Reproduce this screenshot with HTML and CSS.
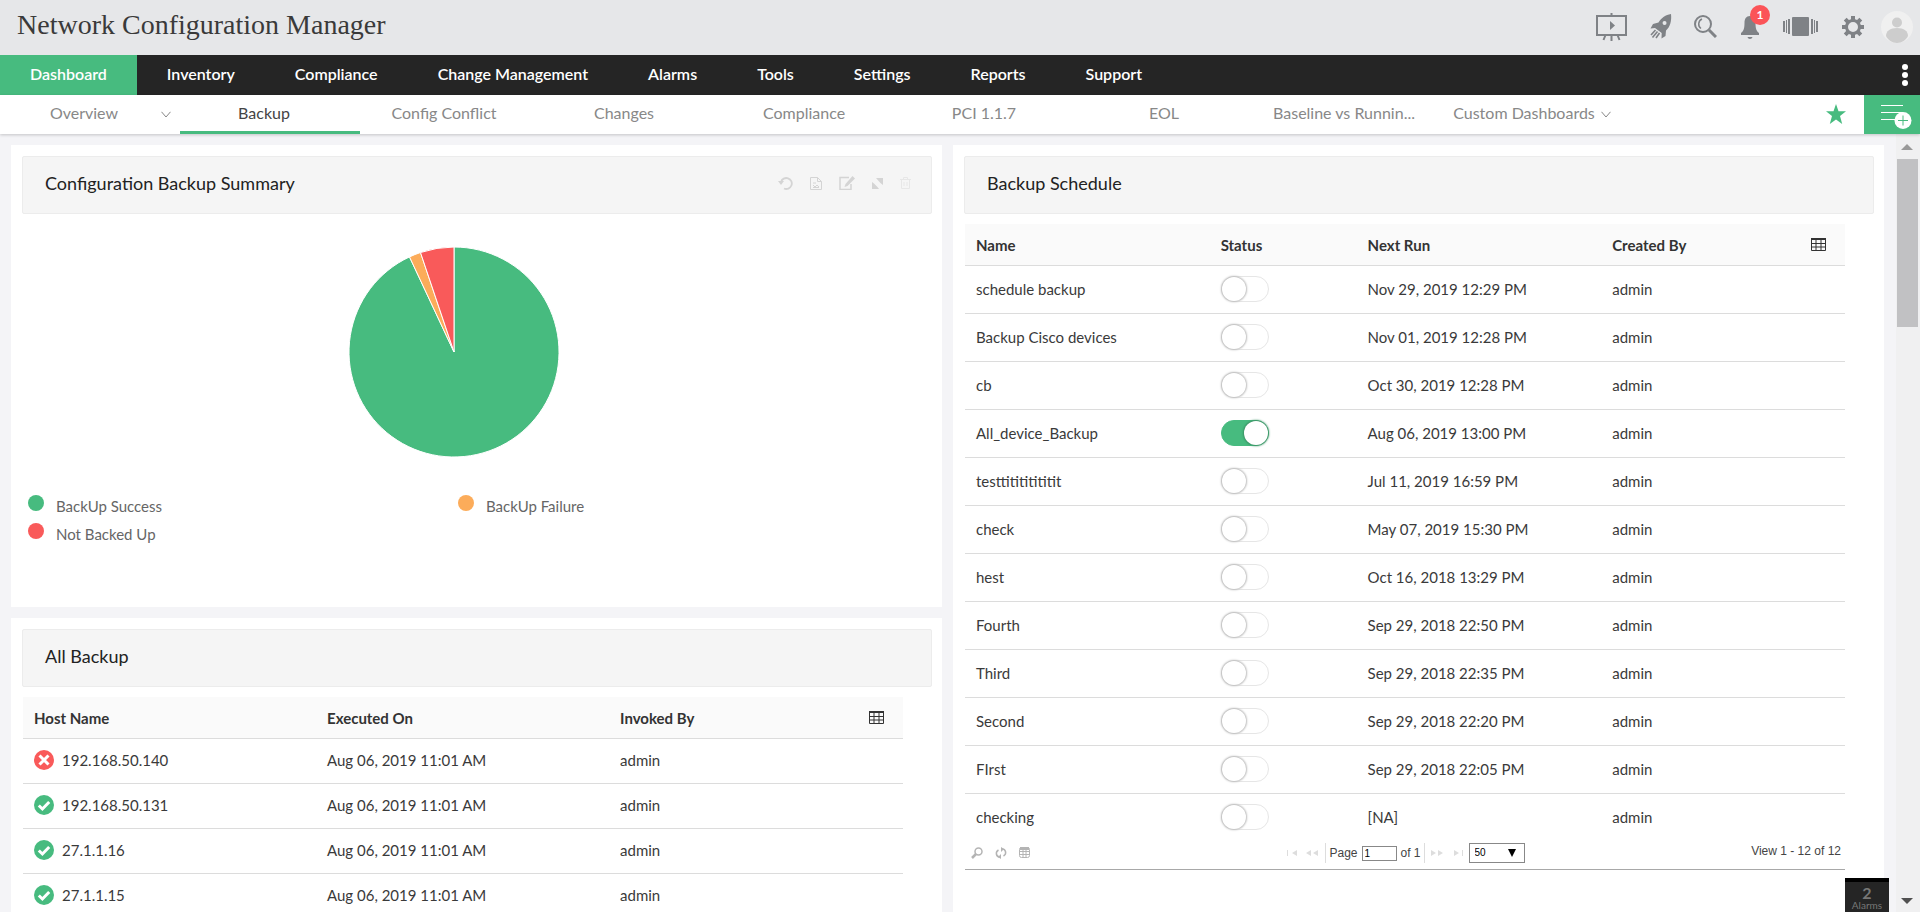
FILE: index.html
```
<!DOCTYPE html>
<html lang="en">
<head>
<meta charset="utf-8">
<title>Network Configuration Manager</title>
<link rel="stylesheet" href="styles.css">
</head>
<body>
<svg class="defs" width="0" height="0" aria-hidden="true">
  <symbol id="grid" viewBox="0 0 15 13"><path fill="none" stroke="currentColor" d="M.5 1.5h14v11H.5zM.5 5.5h14M.5 9h14M5 1v12M10 1v12"/><path fill="currentColor" d="M0 0h15v2H0z"/></symbol>
  <symbol id="ok" viewBox="0 0 20 20"><circle cx="10" cy="10" r="10" fill="#47bb7f"/><path d="M4.800 10.500l3.600 3.500 6.800-7" fill="none" stroke="#fff" stroke-width="3"/></symbol>
  <symbol id="bad" viewBox="0 0 20 20"><circle cx="10" cy="10" r="10" fill="#f95a5a"/><path d="M5.500 5.500l9 9m0-9l-9 9" fill="none" stroke="#fff" stroke-width="3"/></symbol>
  <symbol id="chev" viewBox="0 0 10 7"><path d="M.5.8L5 6 9.500.8" fill="none" stroke="currentColor"/></symbol>
</svg>

<header class="top">
  <h1>Network Configuration Manager</h1>
  <div class="tools">
    <button class="t-easel" aria-label="Presentation"><svg width="31" height="28" viewBox="0 0 31 28"><g fill="none" stroke="currentColor" stroke-width="2"><path d="M1 3h29v19H1zM15.500 0v3M15.500 22v6M9.500 22l-2 5M21.500 22l2 5"/></g><path fill="currentColor" d="M14 8l5 4.500-5 4.500z"/></svg></button>
    <button class="t-rocket" aria-label="Quick start"><svg width="22" height="25" viewBox="0 0 22 25"><path fill="currentColor" fill-rule="evenodd" d="M21 0c.8 7-.8 13-5 16.500L15.500 22l-4 2.500.2-5.500L5 14 .5 14.500 3 10l5.500-1.500C11.500 3.500 15.500 1 21 0zM14.500 7a2 2 0 1 0 .1 4 2 2 0 0 0-.1-4z"/><path fill="none" stroke="currentColor" stroke-width="1.600" d="M5.500 16L1 21M7.500 17.500l-5 6M9.500 19l-3.500 5"/></svg></button>
    <button class="t-search" aria-label="Search"><svg width="23" height="23" viewBox="0 0 23 23"><g fill="none" stroke="currentColor"><circle cx="9" cy="9" r="8" stroke-width="2"/><path stroke-width="1.500" d="M8 4a5.500 5.500 0 0 0-1 9.500"/><path stroke-width="3" d="M15 15l7 7"/></g></svg></button>
    <button class="t-bell" aria-label="Notifications"><svg width="18" height="24" viewBox="0 0 18 24"><path fill="currentColor" d="M9 1c4 0 5.500 3 5.500 7 0 6 1 8 3.500 10v2H0v-2c2.500-2 3.500-4 3.500-10C3.500 4 5 1 9 1zM6.500 22h5c-.5 2.500-4.500 2.500-5 0z"/></svg><span class="badge">1</span></button>
    <button class="t-carousel" aria-label="Widgets"><svg width="35" height="19" viewBox="0 0 35 19"><g fill="currentColor"><rect x="9" width="17" height="19" rx="1"/><path d="M0 4h2v11H0zM3 3h1v13H3zM5 2h2v15H5zM28 2h2v15h-2zM31 3h1v13h-1zM33 4h2v11h-2z"/></g></svg></button>
    <button class="t-gear" aria-label="Settings"><svg width="22" height="22" viewBox="0 0 22 22"><circle cx="11" cy="11" r="6.500" fill="none" stroke="currentColor" stroke-width="3"/><g stroke="currentColor" stroke-width="4"><path d="M11 0v4M11 18v4M0 11h4M18 11h4M3.200 3.200L6 6M16 16l2.800 2.800M3.200 18.800L6 16M16 6l2.800-2.800"/></g></svg></button>
    <button class="t-user" aria-label="Account"><svg width="32" height="32" viewBox="0 0 32 32"><circle cx="16" cy="16" r="16" fill="#f0f0f0"/><g fill="#cdcdcd"><circle cx="16" cy="11.500" r="5"/><path d="M5 25c0-5 4-8 11-8s11 3 11 8c-2 4-6 7-11 7S7 29 5 25z"/></g></svg></button>
  </div>
</header>

<nav class="main-nav">
  <a class="on" href="#">Dashboard</a><a href="#">Inventory</a><a href="#">Compliance</a><a href="#">Change Management</a><a href="#">Alarms</a><a href="#">Tools</a><a href="#">Settings</a><a href="#">Reports</a><a href="#">Support</a>
  <button class="more" aria-label="More"><svg width="6" height="22" viewBox="0 0 6 22" fill="#fff"><circle cx="3" cy="3" r="3"/><circle cx="3" cy="11" r="3"/><circle cx="3" cy="19" r="3"/></svg></button>
</nav>

<nav class="sub-nav">
  <a href="#">Overview<svg class="chev" width="10" height="7"><use href="#chev"/></svg></a>
  <a class="on" href="#">Backup</a>
  <a href="#">Config Conflict</a>
  <a href="#">Changes</a>
  <a href="#">Compliance</a>
  <a href="#">PCI 1.1.7</a>
  <a href="#">EOL</a>
  <a href="#">Baseline vs Runnin...</a>
  <a href="#">Custom Dashboards<svg class="chev" width="10" height="7"><use href="#chev"/></svg></a>
  <button class="star" aria-label="Favourite"><svg width="20" height="20" viewBox="0 0 20 20"><path fill="#47bb7f" d="M10 0l2.500 7.300H20l-6 4.700 2.200 8L10 15.400 3.800 20 6 12 0 7.300h7.500z"/></svg></button>
  <button class="add" aria-label="Add widget"><svg width="31" height="26" viewBox="0 0 31 26"><path stroke="#fff" d="M0 1.500h22M0 8.500h22M0 15.500h15"/><circle cx="22" cy="16.500" r="8.500" fill="#fff"/><path stroke="#47bb7f" d="M17 16.500h10M22 11.500v10"/></svg></button>
</nav>

<div class="viewport">
  <main class="board">
    <div class="col">
      <section class="card summary">
        <div class="card-head">
          <h2>Configuration Backup Summary</h2>
          <div class="card-tools">
            <svg width="15" height="14" viewBox="0 0 15 14"><path d="M3 6a5.500 5.500 0 1 1 3 6.500" fill="none" stroke="currentColor" stroke-width="1.800"/><path fill="currentColor" d="M0 5h6L3 9z"/></svg>
            <svg width="12" height="13" viewBox="0 0 12 13"><path d="M.5.5h7l4 4v8H.5zM7.500.5v4h4M3 6h3M3 8l2 2 2-2 2 2M3 10.500h6" fill="none" stroke="currentColor"/></svg>
            <svg width="16" height="14" viewBox="0 0 16 14"><path d="M10 1.500H1v12h11V8" fill="none" stroke="currentColor" stroke-width="1.500"/><path fill="currentColor" d="M13.500 0L16 2.500 8.500 10 5.500 11l1-3z"/></svg>
            <svg width="11" height="11" viewBox="0 0 11 11"><path fill="currentColor" d="M4 0h7v7L9 5.500 7.500 4zM0 4l2 1.500L5.500 9 7 11H0z"/></svg>
            <svg class="faint" width="11" height="12" viewBox="0 0 11 12"><path d="M0 2.500h11M3.500 2V.5h4V2M1.500 3v8.500h8V3M4 5v4M7 5v4" fill="none" stroke="currentColor"/></svg>
          </div>
        </div>
        <div class="chart">
          <svg width="212" height="212" viewBox="-106 -106 212 212" role="img" aria-label="Backup status">
            <g stroke="#fff">
              <path fill="#47bb7f" d="M0 0V-105A105 105 0 1 1-44.500-95.100Z"/>
              <path fill="#fcac5a" d="M0 0L-44.500-95.100A105 105 0 0 1-33.500-99.500Z"/>
              <path fill="#f95a5a" d="M0 0L-33.500-99.500A105 105 0 0 1 0-105Z"/>
            </g>
          </svg>
        </div>
        <ul class="legend">
          <li class="green">BackUp Success</li><li class="orange">BackUp Failure</li><li class="red">Not Backed Up</li>
        </ul>
      </section>

      <section class="card">
        <div class="card-head"><h2>All Backup</h2></div>
        <table class="grid hosts">
          <colgroup><col class="third"><col class="third"><col></colgroup>
          <thead><tr><th>Host Name</th><th>Executed On</th><th><div class="last">Invoked By<button aria-label="Columns"><svg width="15" height="13"><use href="#grid"/></svg></button></div></th></tr></thead>
          <tbody>
            <tr><td><div class="host"><svg width="20" height="20"><use href="#bad"/></svg>192.168.50.140</div></td><td>Aug 06, 2019 11:01 AM</td><td>admin</td></tr>
            <tr><td><div class="host"><svg width="20" height="20"><use href="#ok"/></svg>192.168.50.131</div></td><td>Aug 06, 2019 11:01 AM</td><td>admin</td></tr>
            <tr><td><div class="host"><svg width="20" height="20"><use href="#ok"/></svg>27.1.1.16</div></td><td>Aug 06, 2019 11:01 AM</td><td>admin</td></tr>
            <tr><td><div class="host"><svg width="20" height="20"><use href="#ok"/></svg>27.1.1.15</div></td><td>Aug 06, 2019 11:01 AM</td><td>admin</td></tr>
          </tbody>
        </table>
      </section>
    </div>

    <div class="col">
      <section class="card">
        <div class="card-head"><h2>Backup Schedule</h2></div>
        <table class="grid schedule">
          <colgroup><col class="wide"><col class="slim"><col class="wide"><col></colgroup>
          <thead><tr><th>Name</th><th>Status</th><th>Next Run</th><th><div class="last">Created By<button aria-label="Columns"><svg width="15" height="13"><use href="#grid"/></svg></button></div></th></tr></thead>
          <tbody>
            <tr><td>schedule backup</td><td><input type="checkbox" class="switch" aria-label="schedule backup"></td><td>Nov 29, 2019 12:29 PM</td><td>admin</td></tr>
            <tr><td>Backup Cisco devices</td><td><input type="checkbox" class="switch" aria-label="Backup Cisco devices"></td><td>Nov 01, 2019 12:28 PM</td><td>admin</td></tr>
            <tr><td>cb</td><td><input type="checkbox" class="switch" aria-label="cb"></td><td>Oct 30, 2019 12:28 PM</td><td>admin</td></tr>
            <tr><td>All_device_Backup</td><td><input type="checkbox" class="switch" aria-label="All_device_Backup" checked></td><td>Aug 06, 2019 13:00 PM</td><td>admin</td></tr>
            <tr><td>testtitititititit</td><td><input type="checkbox" class="switch" aria-label="testtitititititit"></td><td>Jul 11, 2019 16:59 PM</td><td>admin</td></tr>
            <tr><td>check</td><td><input type="checkbox" class="switch" aria-label="check"></td><td>May 07, 2019 15:30 PM</td><td>admin</td></tr>
            <tr><td>hest</td><td><input type="checkbox" class="switch" aria-label="hest"></td><td>Oct 16, 2018 13:29 PM</td><td>admin</td></tr>
            <tr><td>Fourth</td><td><input type="checkbox" class="switch" aria-label="Fourth"></td><td>Sep 29, 2018 22:50 PM</td><td>admin</td></tr>
            <tr><td>Third</td><td><input type="checkbox" class="switch" aria-label="Third"></td><td>Sep 29, 2018 22:35 PM</td><td>admin</td></tr>
            <tr><td>Second</td><td><input type="checkbox" class="switch" aria-label="Second"></td><td>Sep 29, 2018 22:20 PM</td><td>admin</td></tr>
            <tr><td>FIrst</td><td><input type="checkbox" class="switch" aria-label="FIrst"></td><td>Sep 29, 2018 22:05 PM</td><td>admin</td></tr>
            <tr><td>checking</td><td><input type="checkbox" class="switch" aria-label="checking"></td><td>[NA]</td><td>admin</td></tr>
          </tbody>
        </table>
        <div class="pager">
          <div class="pager-tools">
            <svg width="12" height="12" viewBox="0 0 12 12"><circle cx="7.500" cy="4.500" r="3.500" fill="none" stroke="currentColor" stroke-width="1.500"/><path stroke="currentColor" stroke-width="2.500" d="M5 7l-4 4"/></svg>
            <svg width="12" height="12" viewBox="0 0 12 12"><path fill="none" stroke="currentColor" stroke-width="1.500" d="M5 10C1 10 0 5 3.500 3M7 2c4 0 5 5 1.500 7"/><path fill="currentColor" d="M6 0v5L9 2zM6 7v5L3 10z"/></svg>
            <svg width="11" height="11" viewBox="0 0 11 11"><rect x=".5" y=".5" width="10" height="10" rx="2" fill="none" stroke="currentColor"/><path fill="none" stroke="currentColor" d="M1 4.500h9M1 7.500h9M4 2v8M7 2v8"/><path fill="currentColor" d="M1 0h9v3H1z"/></svg>
          </div>
          <div class="pager-mid">
            <svg class="arrows" width="32" height="8" viewBox="0 0 32 8" fill="currentColor"><path d="M0 1h1v6H0zM5 4l5-3v6zM19 4l5-3v6zM26 4l5-3v6z"/></svg>
            <label class="page">Page <input type="text" value="1"> of 1</label>
            <svg class="arrows" width="32" height="8" viewBox="0 0 32 8" fill="currentColor"><path d="M5 4L0 1v6zM12 4L7 1v6zM28 4l-5-3v6zM31 1h1v6h-1z"/></svg>
            <span class="pick"><select aria-label="Rows per page"><option>50</option></select></span>
          </div>
          <div class="view">View 1 - 12 of 12</div>
        </div>
      </section>
    </div>
  </main>
  <div class="scroll" aria-hidden="true"><i class="up"></i><i class="thumb"></i><i class="down"></i></div>
  <a class="alarms" href="#"><b>2</b>Alarms</a>
</div>
</body>
</html>
```
FILE: styles.css
```
* { box-sizing: border-box; }
body {
  margin: 0;
  height: 100vh;
  overflow: hidden;
  display: flex;
  flex-direction: column;
  background: #f4f4f7;
  color: #3a3a3a;
  font: 15px/20px Lato, "Liberation Sans", sans-serif;
}
button { border: 0; padding: 0; background: none; color: inherit; font: inherit; display: block; }
svg { display: block; flex: none; }
a { color: inherit; text-decoration: none; }
h1, h2 { margin: 0; font-weight: 400; }
.defs { position: absolute; }

.top {
  flex: none;
  height: 55px;
  padding: 0 7px 0 17px;
  display: flex;
  justify-content: space-between;
  background: #e6e7e9;
}
.top h1 { padding-top: 7px; color: #3a3a3a; font: 300 28px/36px "Roboto Slab", "Liberation Serif", serif; }
.tools { display: flex; align-items: center; gap: 24px; padding-bottom: 2px; color: #7f8286; }
.t-rocket { margin-left: -1px; }
.t-search { margin-left: -2px; }
.t-bell { position: relative; }
.t-user { margin-left: -7px; }
.badge {
  position: absolute;
  left: 9px;
  top: -10px;
  width: 20px;
  height: 20px;
  border-radius: 50%;
  background: #fb5458;
  color: #fff;
  font: 700 12px/20px Lato, sans-serif;
  text-align: center;
}

.main-nav {
  flex: none;
  height: 40px;
  display: flex;
  background: #252525;
  color: #fff;
  font-size: 16px;
  font-weight: 600;
  line-height: 38px;
}
.main-nav a { padding: 0 30px; }
.main-nav .on { background: #47bb7f; }
.more { margin: 0 12px 0 auto; }

.sub-nav {
  flex: none;
  position: relative;
  z-index: 1;
  height: 39px;
  display: flex;
  background: #fff;
  box-shadow: 0 1px 3px rgba(0, 0, 0, .2);
  color: #888;
  font-size: 16px;
  line-height: 36px;
}
.sub-nav a { position: relative; flex: 0 0 180px; padding-right: 12px; text-align: center; }
.sub-nav .on { color: #444; border-bottom: 3px solid #47bb7f; }
.chev { position: absolute; right: 9px; top: 16px; }
.star { margin: 0 18px 2px auto; }
.add { width: 56px; background: #47bb7f; padding: 4px 0 0 17px; }

.viewport { position: relative; flex: 1; min-height: 0; display: flex; overflow: hidden; }
.board { flex: 1; display: grid; grid-template-columns: 1fr 1fr; gap: 11px; padding: 11px 12px 0 11px; }
.col { display: flex; flex-direction: column; gap: 11px; }
.card { background: #fff; padding: 11px 10px 11px 11px; }
.col > .card:last-child { flex: 1; }
.summary { flex: 0 0 462px; }
.card-head {
  height: 58px;
  padding: 0 20px 4px 22px;
  display: flex;
  align-items: center;
  justify-content: space-between;
  background: #f5f5f5;
  border: 1px solid #ececec;
  border-radius: 2px;
}
.card-head h2 { font-size: 18px; color: #222; }
.card-tools { display: flex; align-items: center; gap: 17px; color: #d4d4d4; }
.faint { opacity: .4; }

.chart { display: flex; justify-content: center; padding: 32px 47px 0 0; }
.legend {
  list-style: none;
  margin: 34px 0 0;
  padding: 0 6px;
  display: grid;
  grid-template-columns: 430px 1fr;
  color: #666;
}
.legend li { display: flex; gap: 12px; line-height: 28px; }
.legend li::before { content: ""; width: 16px; height: 16px; margin-top: 3px; border-radius: 50%; background: currentColor; }
.green::before { color: #47bb7f; }
.orange::before { color: #fcac5a; }
.red::before { color: #f95a5a; }

.grid { width: calc(100% - 30px); margin: 10px 0 0 1px; border-collapse: collapse; table-layout: fixed; }
.grid th, .grid td { padding: 0 11px; text-align: left; border-bottom: 1px solid #dcdcdc; }
.grid th { height: 41px; padding-top: 1px; background: #fafafa; font-weight: 700; color: #333; }
.grid td { padding-bottom: 1px; }
.third { width: 33.300%; }
.wide { width: 27.800%; }
.slim { width: 16.700%; }
.hosts td { height: 45px; }
.schedule td { height: 48px; }
.schedule tr:last-child td { border-bottom: 0; }
.last { display: flex; align-items: center; justify-content: space-between; padding-right: 8px; }
.host { display: flex; align-items: center; gap: 8px; }

.switch {
  appearance: none;
  display: block;
  position: relative;
  width: 48px;
  height: 26px;
  margin: 0;
  border: 1px solid #e6e6e6;
  border-radius: 13px;
  background: #fff;
}
.switch::before {
  content: "";
  position: absolute;
  left: 0;
  top: 0;
  width: 24px;
  height: 24px;
  border-radius: 50%;
  background: #fff;
  box-shadow: 0 0 2px 1px #bbb;
}
.switch:checked { background: #47bb7f; border-color: #47bb7f; }
.switch:checked::before { left: 22px; box-shadow: 0 0 2px 1px #3a8f63; }

.pager {
  width: calc(100% - 30px);
  height: 29px;
  margin-left: 1px;
  padding: 0 4px 4px 6px;
  display: grid;
  grid-template-columns: 1fr auto 1fr;
  align-items: center;
  border-bottom: 1px solid #a8a8a8;
  color: #444;
  font: 12px/16px "Liberation Sans", Arial, sans-serif;
}
.pager-tools { display: flex; gap: 12px; color: #b4b4b4; }
.pager-mid { display: flex; align-items: center; gap: 6px; }
.arrows { color: #ddd; }
.page { display: flex; align-items: center; gap: 4px; padding: 0 3px; border: solid #ddd; border-width: 0 1px; line-height: 20px; }
.page input { width: 35px; height: 15px; padding: 0 2px; border: 1px solid #888; font: 10px/12px "Liberation Sans", sans-serif; }
.pick { position: relative; }
.pick::after { content: ""; position: absolute; right: 9px; top: 6px; border: solid transparent; border-width: 8px 4px 0; border-top-color: #000; }
.pick select { appearance: none; display: block; width: 56px; height: 20px; padding: 0 5px; border: 1px solid #888; border-radius: 0; background: #fff; color: #000; font: 10px/16px "Liberation Sans", sans-serif; }
.view { padding-bottom: 4px; text-align: right; }

.scroll { flex: 0 0 24px; display: flex; flex-direction: column; align-items: center; background: #f0f0f1; padding: 10px 2px 8px 0; }
.scroll .up { border: solid transparent; border-width: 0 6px 6px; border-bottom-color: #999; }
.scroll .thumb { width: 21px; height: 168px; margin-top: 9px; background: #c1c1c3; }
.scroll .down { margin-top: auto; border: solid transparent; border-width: 6px 6px 0; border-top-color: #505050; }

.alarms {
  position: absolute;
  right: 31px;
  bottom: 0;
  width: 44px;
  height: 34px;
  padding-top: 5px;
  border-top: 4px solid #000;
  background: #252525;
  color: #777;
  font-size: 10px;
  line-height: 12px;
  text-align: center;
}
.alarms b { display: block; font-size: 16px; }
```
